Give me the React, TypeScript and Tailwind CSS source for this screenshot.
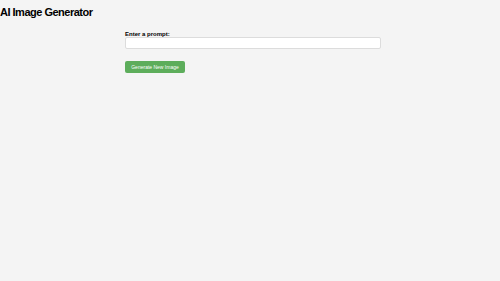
export default function App() {
  return (
    <div className="min-h-[281px] bg-[#f4f4f4] text-black" style={{ fontFamily: '"Liberation Sans", Arial, sans-serif' }}>
      <h1 className="text-[11px] font-bold leading-none pt-[7px] tracking-[-0.5px]">AI Image Generator</h1>
      <div className="w-[262px] pl-[6px] mx-auto mt-[12px] flex flex-col">
        <label className="text-[6px] font-bold leading-none pt-[1px]">Enter a prompt:</label>
        <input className="h-[12px] w-full bg-white border border-[#dcdcdc] rounded-[2px] outline-none" />
        <button className="mt-[12px] w-[60px] h-[12px] bg-[#5dad5b] text-white text-[5px] leading-none rounded-[2px]">Generate New Image</button>
      </div>
    </div>
  );
}
